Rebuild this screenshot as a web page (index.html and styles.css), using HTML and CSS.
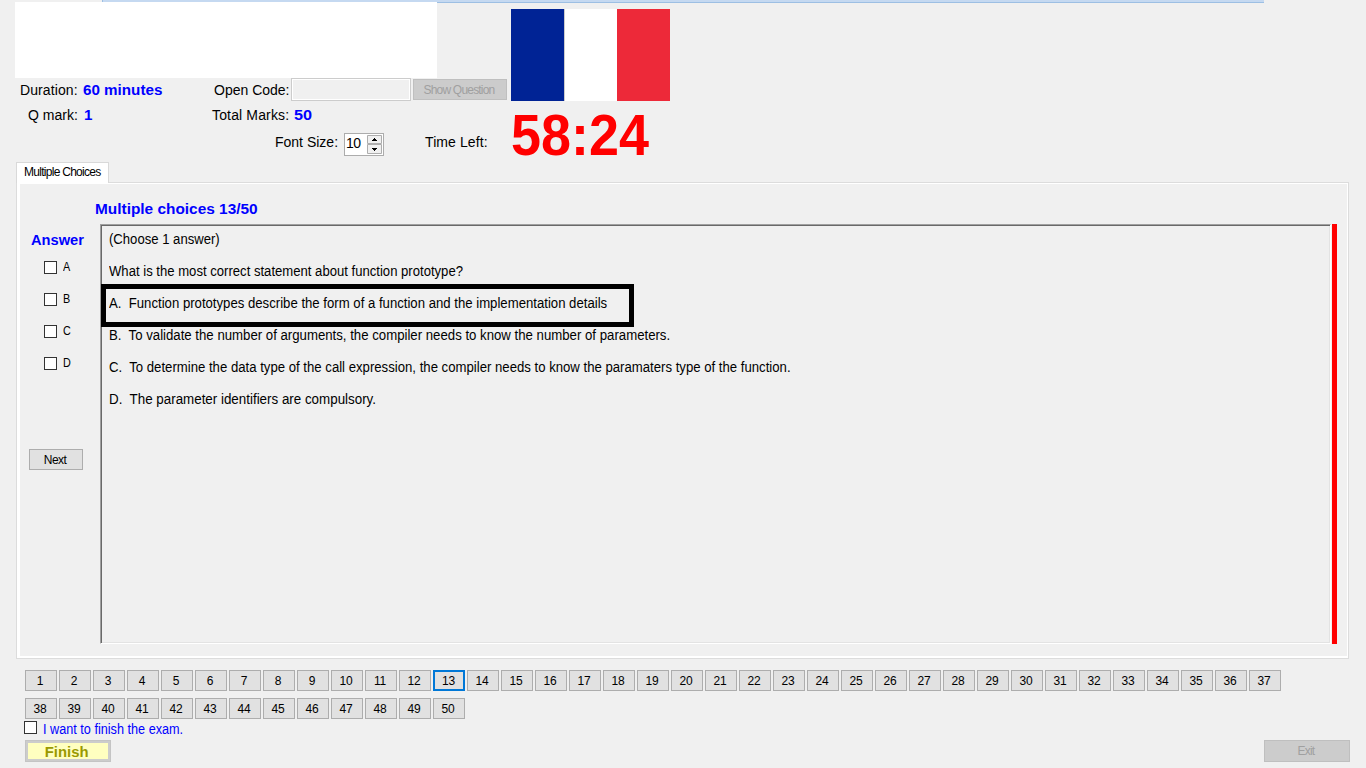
FILE: index.html
```html
<!DOCTYPE html>
<html lang="en">
<head>
<meta charset="utf-8">
<title>Exam</title>
<link rel="stylesheet" href="styles.css">
</head>
<body>
<div class="strip"></div>
<header class="header">
  <div class="info">
    <div class="blank"></div>
    <div class="row row-code">
      <span class="label duration">Duration:</span><b class="value minutes">60 minutes</b>
      <span class="label open-code">Open Code:</span><span class="code-input"></span><button class="btn disabled show">Show Question</button>
    </div>
    <div class="row row-marks">
      <span class="label qmark">Q mark:</span><b class="value one">1</b>
      <span class="label total">Total Marks:</span><b class="value fifty">50</b>
    </div>
    <div class="row row-font">
      <span class="label font-size">Font Size:</span>
      <div class="spinner"><span class="num">10</span>
        <div class="arrows">
          <svg width="15" height="9" viewBox="0 0 15 9"><path d="M.5.5h14v8H.5z" fill="#f0f0f0" stroke="#adadad"/><path d="M7 3h1v1h1v1h1v1H5V5h1V4h1z"/></svg>
          <svg width="15" height="10" viewBox="0 0 15 10"><path d="M.5.5h14v9H.5z" fill="#f0f0f0" stroke="#adadad"/><path d="M5 4h5v1H9v1H8v1H7V6H6V5H5z"/></svg>
        </div>
      </div>
      <span class="label time-left">Time Left:</span>
    </div>
  </div>
  <div class="side">
    <div class="flag"><i class="blue"></i><i class="white"></i><i class="red"></i></div>
    <b class="timer">58:24</b>
  </div>
</header>
<div class="tab"><span>Multiple Choices</span></div>
<main class="panel">
  <aside class="answers">
    <b class="answer-title">Answer</b>
    <label class="choice"><i class="box"></i><span>A</span></label>
    <label class="choice"><i class="box"></i><span>B</span></label>
    <label class="choice"><i class="box"></i><span>C</span></label>
    <label class="choice"><i class="box"></i><span>D</span></label>
    <button class="btn next">Next</button>
  </aside>
  <section class="content">
    <h1 class="progress"><span>Multiple choices 13/50</span></h1>
    <div class="question-wrap">
      <div class="question">
        <p class="q0">(Choose 1 answer)</p>
        <p class="q1">What is the most correct statement about function prototype?</p>
        <p class="q2">A.&nbsp; Function prototypes describe the form of a function and the implementation details</p>
        <p class="q3">B.&nbsp; To validate the number of arguments, the compiler needs to know the number of parameters.</p>
        <p class="q4">C.&nbsp; To determine the data type of the call expression, the compiler needs to know the paramaters type of the function.</p>
        <p class="q5">D.&nbsp; The parameter identifiers are compulsory.</p>
        <div class="marker"></div>
      </div>
      <div class="red-bar"></div>
    </div>
  </section>
</main>
<nav class="numbers">
  <button class="btn">1</button><button class="btn">2</button><button class="btn">3</button><button class="btn">4</button><button class="btn">5</button><button class="btn">6</button><button class="btn">7</button><button class="btn">8</button><button class="btn">9</button><button class="btn">10</button><button class="btn">11</button><button class="btn">12</button><button class="btn current">13</button><button class="btn">14</button><button class="btn">15</button><button class="btn">16</button><button class="btn">17</button><button class="btn">18</button><button class="btn">19</button><button class="btn">20</button><button class="btn">21</button><button class="btn">22</button><button class="btn">23</button><button class="btn">24</button><button class="btn">25</button><button class="btn">26</button><button class="btn">27</button><button class="btn">28</button><button class="btn">29</button><button class="btn">30</button><button class="btn">31</button><button class="btn">32</button><button class="btn">33</button><button class="btn">34</button><button class="btn">35</button><button class="btn">36</button><button class="btn">37</button><button class="btn">38</button><button class="btn">39</button><button class="btn">40</button><button class="btn">41</button><button class="btn">42</button><button class="btn">43</button><button class="btn">44</button><button class="btn">45</button><button class="btn">46</button><button class="btn">47</button><button class="btn">48</button><button class="btn">49</button><button class="btn">50</button>
</nav>
<label class="confirm"><i class="box"></i><span>I want to finish the exam.</span></label>
<footer class="footer">
  <button class="finish"><span>Finish</span></button>
  <button class="btn disabled exit">Exit</button>
</footer>
</body>
</html>
```
FILE: styles.css
```css
* { box-sizing: border-box; }
body {
  margin: 0; width: 1366px; height: 768px; overflow: hidden; position: relative;
  background: #f0f0f0; color: #000;
  font: 14px/16px "Liberation Sans", Arial, sans-serif;
}
p, h1 { margin: 0; }
.strip {
  position: absolute; left: 102px; top: 0; width: 1162px; height: 3px;
  background: #c5d9f1; border-left: 1px solid #9dbfe3; border-bottom: 1px solid #9dbfe3;
}
.header { display: flex; height: 162px; gap: 4px; }
.info { width: 507px; padding-top: 2px; position: relative; }
.blank { width: 422px; height: 76px; margin-left: 15px; background: #fff; }
.row { display: flex; align-items: center; white-space: nowrap; }
.row-code { height: 24px; }
.row-marks { height: 26px; }
.row-font { height: 31px; align-items: flex-start; }
.label { flex: none; }
.duration { width: 63px; margin-left: 20px; letter-spacing: .1px; }
.value { color: #00f; flex: none; font-size: 14px; transform-origin: 0 50%; transform: scaleX(1.085); }
.minutes { width: 131px; }
.open-code { width: 77px; }
.code-input { width: 120px; height: 23px; margin-bottom: 1px; background: #f0f0f0; border: 1px solid #ccc; box-shadow: inset 0 0 0 1px #fff; }
.btn {
  padding: 0; background: #e1e1e1; border: 1px solid #adadad; color: #000;
  font: 12px/14px "Liberation Sans", Arial, sans-serif; letter-spacing: -.3px;
}
.disabled { background: #ccc; border-color: #bfbfbf; color: #a0a0a0; }
.show { width: 94px; height: 21px; margin: 0 0 2px 2px; letter-spacing: -.8px; padding: 2px 2px 0 0; }
.qmark { margin-left: 28px; width: 56px; }
.one { width: 128px; }
.total { width: 82px; letter-spacing: .15px; }
.fifty { transform: scaleX(1.16); }
.font-size { margin: 6px 0 0 275px; width: 69px; }
.spinner { width: 40px; height: 23px; margin-top: 5px; border: 1px solid #acacac; background: #fff; display: flex; align-items: center; justify-content: space-between; padding: 0 1px; }
.num { padding: 0 0 3px 0; letter-spacing: -.6px; }
.arrows { display: flex; flex-direction: column; }
.arrows svg { display: block; }
.time-left { margin: 6px 0 0 41px; letter-spacing: .1px; }
.side { width: 170px; padding-top: 9px; }
.flag { width: 159px; height: 92px; display: grid; grid-template-columns: 53px 53px 53px; }
.blue { background: #002395; }
.white { background: #fff; border-left: 1px solid #ccc; }
.red { background: #ed2939; }
.timer { display: block; color: #f00; font-size: 58px; line-height: 64px; margin-top: 2px; transform: scaleX(.93); transform-origin: 0 50%; }
.tab { width: 93px; height: 21px; margin: 0 0 -1px 16px; position: relative; z-index: 1; background: #fff; border: 1px solid #d9d9d9; border-bottom: 0; padding: 1px 0 0 7px; font-size: 12px; white-space: nowrap; letter-spacing: -.72px; }
.panel {
  margin-left: 16px; width: 1333px; height: 477px; border: 1px solid #dcdcdc;
  box-shadow: inset 3px 1px 0 #fff, inset -1px -2px 0 #fff; display: flex;
}
.answers { width: 83px; padding: 49px 0 0 12px; }
.answer-title { display: block; color: #00f; font-size: 14px; margin: 0 0 11px 2px; transform: scaleX(1.045); transform-origin: 0 50%; }
.choice { display: flex; align-items: center; height: 16px; margin: 0 0 16px 15px; font-size: 12px; gap: 6px; }
.choice span { transform: scaleX(.9); transform-origin: 0 50%; }
.box { width: 13px; height: 13px; border: 1px solid #333; background: #fff; flex: none; }
.next { display: block; width: 54px; height: 21px; margin-top: 78px; padding-right: 2px; letter-spacing: -.6px; }
.content { width: 1237px; padding-top: 18px; }
.progress { font-size: 14px; line-height: 16px; height: 23px; color: #00f; margin-left: -5px; }
.progress span { display: inline-block; transform: scaleX(1.1); transform-origin: 0 50%; white-space: nowrap; }
.question-wrap { display: flex; gap: 1px; height: 420px; }
.question { position: relative; width: 1231px; border: 1px solid #a0a0a0; border-right-color: #fff; border-bottom-color: #fff; box-shadow: inset 1px 1px 0 #696969, inset -1px -1px 0 #e3e3e3; padding: 6px 8px; white-space: nowrap; }
.question p { height: 16px; margin-bottom: 16px; transform: scaleX(.936); transform-origin: 0 50%; }
.question .q2, .question .q4 { transform: scaleX(.94); }
.question .q3 { transform: scaleX(.943); }
.question .q5 { transform: scaleX(.955); }
.marker { position: absolute; left: 0; top: 59px; width: 533px; height: 43px; border: 5px solid #000; }
.red-bar { width: 5px; background: #f00; }
.numbers { margin: 11px 0 0 25px; width: 1260px; display: flex; flex-wrap: wrap; gap: 7px 2px; }
.numbers .btn { width: 32px; height: 21px; padding-right: 2px; letter-spacing: -.2px; }
.numbers .current { border: 2px solid #0078d7; padding-right: 1px; }
.confirm { display: flex; margin: 2px 0 0 24px; height: 19px; gap: 6px; color: #00f; white-space: nowrap; }
.confirm span { transform: scaleX(.905); transform-origin: 0 50%; }
.footer { display: flex; justify-content: space-between; padding: 0 16px 0 25px; }
.finish { width: 86px; height: 22px; padding: 1px 3px 0 0; background: #ffffc0; border: 3px solid #ccc; outline: 1px solid #c4c4c4; outline-offset: -1px; color: #990; font: bold 14px/16px "Liberation Sans", Arial, sans-serif; }
.finish span { display: inline-block; transform: scaleX(1.06); }
.exit { width: 86px; height: 22px; padding-right: 2px; letter-spacing: -.8px; }
```
